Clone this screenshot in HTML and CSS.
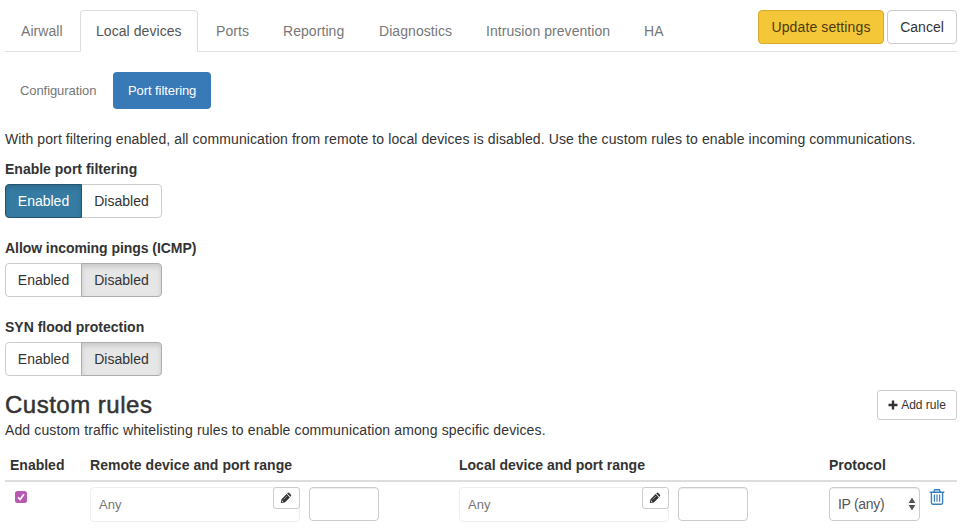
FILE: index.html
```html
<!DOCTYPE html>
<html lang="en">
<head>
<meta charset="utf-8">
<title>Port filtering</title>
<link rel="stylesheet" href="styles.css">
</head>
<body>
<svg class="defs" aria-hidden="true">
  <symbol id="pencil" viewBox="0 0 12 12"><path fill="currentColor" d="M.8 11l.7-3.8L6.6 2.1l3.3 3.3-5.2 5zM7.2 1.5l.7-.7q.6-.5 1.1 0l2 2q.5.6 0 1.2l-.6.7z"/><path stroke="#fff" stroke-width=".5" d="M3.6 7.5l3.4-3.4"/><path fill="#fff" d="M2 8.3l1.4 1.4-1.3.3z"/></symbol>
</svg>
<header class="topbar">
  <nav class="tabs">
    <a class="tab airwall">Airwall</a>
    <a class="tab active">Local devices</a>
    <a class="tab ports">Ports</a>
    <a class="tab reporting">Reporting</a>
    <a class="tab diagnostics">Diagnostics</a>
    <a class="tab intrusion">Intrusion prevention</a>
    <a class="tab">HA</a>
  </nav>
  <div class="actions">
    <button class="btn update">Update settings</button>
    <button class="btn cancel">Cancel</button>
  </div>
</header>
<nav class="pills">
  <a class="pill config">Configuration</a>
  <a class="pill selected">Port filtering</a>
</nav>
<p class="intro">With port filtering enabled, all communication from remote to local devices is disabled. Use the custom rules to enable incoming communications.</p>
<section class="setting">
  <label>Enable port filtering</label>
  <div class="group"><button class="btn on primary">Enabled</button><button class="btn">Disabled</button></div>
</section>
<section class="setting">
  <label class="icmp">Allow incoming pings (ICMP)</label>
  <div class="group"><button class="btn">Enabled</button><button class="btn on">Disabled</button></div>
</section>
<section class="setting">
  <label>SYN flood protection</label>
  <div class="group"><button class="btn">Enabled</button><button class="btn on">Disabled</button></div>
</section>
<section class="rules-head">
  <div>
    <h3>Custom rules</h3>
    <p>Add custom traffic whitelisting rules to enable communication among specific devices.</p>
  </div>
  <button class="btn add"><svg width="10" height="10" viewBox="0 0 10 10"><path d="M5 .5v9M.5 5h9" stroke="currentColor" stroke-width="2.4"/></svg>Add rule</button>
</section>
<div class="grid head">
  <div>Enabled</div>
  <div class="remote">Remote device and port range</div>
  <div>Local device and port range</div>
  <div>Protocol</div>
</div>
<div class="grid row">
  <div class="check"><svg width="12" height="12" viewBox="0 0 12 12"><path d="M3 6.3l2.1 2.2L9 3.2" fill="none" stroke="#fff" stroke-width="1.7"/></svg></div>
  <div class="range">
    <div class="device"><span>Any</span><button class="edit"><svg width="12" height="12"><use href="#pencil"/></svg></button></div>
    <input class="port" type="text" aria-label="Remote port">
  </div>
  <div class="range">
    <div class="device"><span>Any</span><button class="edit"><svg width="12" height="12"><use href="#pencil"/></svg></button></div>
    <input class="port" type="text" aria-label="Local port">
  </div>
  <div class="protocol">
    <div class="select"><span>IP (any)</span><svg width="8" height="14" viewBox="0 0 8 14"><path fill="#555" d="M4 .5L7.4 6H.6zM4 13.5L7.4 8H.6z"/></svg></div>
    <svg class="trash" width="16" height="18" viewBox="0 0 16 18" fill="none" stroke="#3a80bf"><path stroke-width="1.4" d="M.7 4.2h14.6M4.8 3.9L5.6 1.7h4.8l.8 2.2M2.4 4.5v10.2q0 1.6 1.6 1.6h8q1.6 0 1.6-1.6V4.5"/><path stroke-width="1.2" d="M5.4 6.5v7.2M8 6.5v7.2M10.6 6.5v7.2"/></svg>
  </div>
</div>
</body>
</html>
```

FILE: styles.css
```css
* { box-sizing: border-box; }
body { margin: 0; padding: 10px 10px 0 5px; background: #fff; color: #333; font: 14px/20px "Liberation Sans", Arial, sans-serif; overflow: hidden; }
p, h3 { margin: 0; }
.defs { position: absolute; width: 0; height: 0; }
.topbar { display: flex; justify-content: space-between; height: 42px; border-bottom: 1px solid #ddd; }
.tabs { display: flex; gap: 2px; }
.tab { height: 42px; padding: 10px 0 10px 15px; border: 1px solid transparent; color: #777; white-space: nowrap; letter-spacing: .06px; }
.airwall { width: 73px; }
.ports { width: 65px; }
.reporting { width: 94px; }
.diagnostics { width: 105px; }
.intrusion { width: 156px; }
.tab.active { width: 118px; background: #fff; color: #555; border-color: #ddd #ddd #fff; border-radius: 4px 4px 0 0; }
.actions { display: flex; gap: 3px; }
.btn { height: 34px; padding: 0; border: 1px solid #ccc; border-radius: 4px; background: #fff; color: #333; font: inherit; white-space: nowrap; }
.update { width: 126px; background: #f4c738; border-color: #d9a92b; color: #4d3b0e; letter-spacing: .12px; }
.cancel { width: 70px; }
.pills { display: flex; gap: 2px; margin-top: 20px; font-size: 13px; line-height: 17px; }
.pill { height: 37px; padding: 10px 0 10px 15px; border-radius: 4px; color: #777; white-space: nowrap; letter-spacing: -.08px; }
.config { width: 106px; }
.pill.selected { width: 98px; background: #3879b8; color: #fff; }
.intro { margin: 20px 0 10px; white-space: nowrap; letter-spacing: .094px; }
.setting { height: 79px; }
.setting label { display: block; height: 25px; font-weight: bold; }
.setting .icmp { letter-spacing: -.06px; }
.group { display: flex; }
.group .btn { width: 77px; border-radius: 4px 0 0 4px; }
.group .btn + .btn { width: 81px; margin-left: -1px; border-radius: 0 4px 4px 0; }
.group .on { position: relative; background: #e6e6e6; border-color: #adadad; box-shadow: inset 0 3px 5px rgba(0,0,0,.125); }
.group .primary { background: #357ba2; border-color: #23546f; color: #fff; }
.rules-head { display: flex; justify-content: space-between; align-items: flex-start; margin-top: -6px; height: 60px; white-space: nowrap; }
.rules-head p { letter-spacing: .12px; }
h3 { font-size: 24px; line-height: 30px; font-weight: 500; letter-spacing: .5px; -webkit-text-stroke: .5px #333; }
.add { width: 80px; height: 30px; border-radius: 3px; font-size: 12px; display: flex; align-items: center; justify-content: center; gap: 3px; }
.grid { display: grid; grid-template-columns: 80px 369px 370px 133px; }
.grid > div { padding: 5px; }
.head { height: 32px; border-bottom: 2px solid #ddd; font-weight: bold; white-space: nowrap; }
.remote { letter-spacing: .05px; }
.grid .check { padding: 9px 10px; line-height: 0; }
.check svg { background: #b858b0; border-radius: 2.5px; }
.range { display: flex; gap: 9px; }
.device { display: flex; justify-content: space-between; width: 210px; height: 35px; border: 1px solid #eee; border-radius: 4px; color: #777; font-size: 13px; }
.device span { padding: 7px 8px; }
.edit { width: 27px; height: 22px; margin: -1px -1px 0 0; padding: 0 2px 0 0; border: 1px solid #ccc; border-radius: 3px; background: #fff; color: #333; line-height: 0; }
.port { width: 70px; height: 34px; border: 1px solid #ccc; border-radius: 4px; box-shadow: inset 0 1px 1px rgba(0,0,0,.075); }
.protocol { display: flex; gap: 9px; }
.select { display: flex; justify-content: space-between; align-items: center; width: 91px; height: 34px; padding: 0 3px 0 8px; border: 1px solid #ccc; border-radius: 4px; color: #555; box-shadow: inset 0 1px 1px rgba(0,0,0,.075); letter-spacing: -.3px; }
.trash { margin-top: 1px; }
```
